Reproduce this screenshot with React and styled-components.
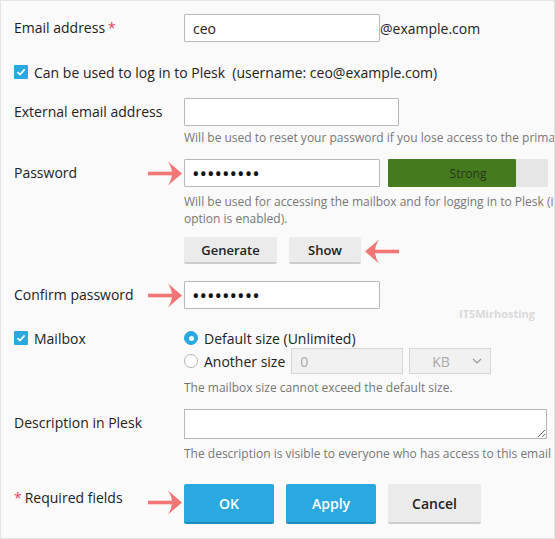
import React from 'react';
import styled, { createGlobalStyle } from 'styled-components';

const GlobalStyle = createGlobalStyle`
  body {
    margin: 0;
    font-family: "Open Sans", "Liberation Sans", sans-serif;
    color: #222;
  }
`;

const Frame = styled.div`
  position: relative;
  box-sizing: border-box;
  width: 555px;
  height: 539px;
  padding-top: 13px;
  border: 1px solid #e3e3e3;
  background: #fafafa;
  overflow: hidden;
`;

const Row = styled.div`
  position: relative;
  display: grid;
  grid-template-columns: 170px 1fr;
  padding-left: 13px;
  margin-top: ${props => props.gap || 0}px;
`;

const Label = styled.div`
  font-size: 14px;
  line-height: ${props => props.lh || 28}px;
  white-space: nowrap;
`;

const Star = styled.span`
  color: #e5405e;
  margin: 0 3px;
`;

const Field = styled.div`
  min-width: 0;
  display: flex;
  flex-direction: column;
  align-items: flex-start;
`;

const Inline = styled.div`
  display: flex;
  align-items: center;
  gap: ${props => props.gap || 0}px;
  font-size: 14px;
  white-space: nowrap;
  margin-top: ${props => props.mt || 0}px;
`;

const TextInput = styled.input`
  box-sizing: border-box;
  width: ${props => props.w}px;
  height: 28px;
  padding: 0 8px;
  border: 1px solid #b8b8b8;
  border-radius: 1px;
  background: #fff;
  font: 14px "Open Sans", "Liberation Sans", sans-serif;
  color: #222;
  outline: none;

  &[type='password'] {
    font-size: 20px;
    padding: 0 7px;
    color: #111;
  }
`;

const DisabledInput = styled.input`
  box-sizing: border-box;
  width: ${props => props.w}px;
  height: 26px;
  padding: 0 8px;
  border: 1px solid #d6d6d6;
  background: #f1f1f1;
  font: 14px "Open Sans", "Liberation Sans", sans-serif;
  color: #aaa;
`;

const FakeSelect = styled.div`
  box-sizing: border-box;
  display: flex;
  align-items: center;
  justify-content: space-between;
  width: 82px;
  height: 26px;
  padding: 0 8px 0 22px;
  border: 1px solid #d6d6d6;
  background: #f1f1f1;
  color: #aaa;
  font-size: 14px;
`;

const Hint = styled.div`
  font-size: 12px;
  line-height: 17px;
  color: #777;
  white-space: nowrap;
  margin-top: ${props => props.mt || 3}px;
`;

const Meter = styled.div`
  position: relative;
  width: 160px;
  height: 28px;
  background: #e6e6e6;
  border-radius: 1px;
  display: flex;
  align-items: center;
  justify-content: center;
  font-size: 12px;
  color: #27331c;
`;

const MeterFill = styled.div`
  position: absolute;
  left: 0;
  top: 0;
  bottom: 0;
  background: #467a1f;
  border-radius: 1px;
`;

const MeterText = styled.span`
  position: relative;
`;

const Button = styled.button`
  box-sizing: border-box;
  width: ${props => props.w}px;
  height: ${props => props.h || 27}px;
  border: 0;
  border-bottom: 2px solid ${props => (props.primary ? '#1d8cbf' : '#cdcdcd')};
  border-radius: 2px;
  background: ${props => (props.primary ? '#29a9e0' : '#ebebeb')};
  color: ${props => (props.primary ? '#fff' : '#222')};
  font: 600 ${props => props.fs || 13}px "Open Sans", "Liberation Sans", sans-serif;
  padding: 0;
`;

const Buttons = styled.div`
  display: flex;
  gap: ${props => props.gap || 12}px;
  margin-top: ${props => props.mt || 0}px;
`;

const Box = styled.span`
  display: inline-flex;
  align-items: center;
  justify-content: center;
  width: 14px;
  height: 14px;
  background: #29a9e0;
  border-radius: 1px;
  flex: none;
`;

const Radio = styled.span`
  box-sizing: border-box;
  display: inline-flex;
  align-items: center;
  justify-content: center;
  width: 14px;
  height: 14px;
  border-radius: 50%;
  flex: none;
  background: ${props => (props.on ? '#29a9e0' : '#fff')};
  border: 1px solid ${props => (props.on ? '#29a9e0' : '#b5b5b5')};

  &::after {
    content: '';
    width: 5px;
    height: 5px;
    border-radius: 50%;
    background: #fff;
    display: ${props => (props.on ? 'block' : 'none')};
  }
`;

const CheckRow = styled.div`
  display: flex;
  align-items: center;
  gap: 6px;
  padding-left: 13px;
  margin-top: 20px;
  height: 20px;
  font-size: 14px;
  white-space: nowrap;
`;

const MailboxLabel = styled.div`
  display: flex;
  align-items: center;
  gap: 6px;
  height: 20px;
  font-size: 14px;
`;

const TextArea = styled.textarea`
  box-sizing: border-box;
  width: 363px;
  height: 30px;
  border: 1px solid #b8b8b8;
  background: #fff;
  resize: vertical;
  display: block;
`;

const ArrowWrap = styled.div`
  position: absolute;
  left: ${props => props.x}px;
  top: ${props => props.y}px;
  width: 34px;
  height: 25px;
  transform: ${props => (props.flip ? 'scaleX(-1)' : 'none')};
`;

const Watermark = styled.div`
  position: absolute;
  right: 19px;
  top: 305px;
  font-size: 11px;
  font-weight: 700;
  color: #d9d9d9;
`;

const Arrow = ({ x, y, flip }) => (
  <ArrowWrap x={x} y={y} flip={flip}>
    <svg width="34" height="25" viewBox="0 0 34 25">
      <rect x="0" y="10.7" width="24" height="3.6" fill="#f37676" />
      <path d="M34 12.5 L20 0.5 Q24 7 24 12.5 Q24 18 20 24.5 Z" fill="#f37676" />
    </svg>
  </ArrowWrap>
);

const Tick = () => (
  <svg width="10" height="10" viewBox="0 0 10 10">
    <path d="M1.5 5.2 L4 7.6 L8.6 2.4" fill="none" stroke="#fff" strokeWidth="1.6" />
  </svg>
);

const Chevron = () => (
  <svg width="10" height="6" viewBox="0 0 10 6">
    <path d="M1 1 L5 5 L9 1" fill="none" stroke="#999" strokeWidth="1.2" />
  </svg>
);

export default function App() {
  return (
    <>
      <GlobalStyle />
      <Frame>
        <Row>
          <Label>
            Email address<Star>*</Star>
          </Label>
          <Field>
            <Inline>
              <TextInput w={196} defaultValue="ceo" />
              @example.com
            </Inline>
          </Field>
        </Row>

        <CheckRow>
          <Box>
            <Tick />
          </Box>
          Can be used to log in to Plesk&nbsp;&nbsp;(username: ceo@example.com)
        </CheckRow>

        <Row gap={16}>
          <Label>External email address</Label>
          <Field>
            <TextInput w={215} />
            <Hint>Will be used to reset your password if you lose access to the primary email address.</Hint>
          </Field>
        </Row>

        <Row gap={13}>
          <Label>Password</Label>
          <Arrow x={147} y={2} />
          <Field>
            <Inline gap={8}>
              <TextInput w={196} type="password" defaultValue="secret123" />
              <Meter>
                <MeterFill style={{ width: '80%' }} />
                <MeterText>Strong</MeterText>
              </Meter>
            </Inline>
            <Hint mt={6}>
              Will be used for accessing the mailbox and for logging in to Plesk (if the corresponding
              <br />
              option is enabled).
            </Hint>
            <Buttons mt={10}>
              <Button w={93}>Generate</Button>
              <Button w={72}>Show</Button>
            </Buttons>
          </Field>
          <Arrow x={364} y={80} flip />
        </Row>

        <Row gap={17}>
          <Label>Confirm password</Label>
          <Arrow x={147} y={2} />
          <Field>
            <TextInput w={196} type="password" defaultValue="secret123" />
          </Field>
        </Row>

        <Watermark>ITSMirhosting</Watermark>

        <Row gap={19}>
          <MailboxLabel>
            <Box>
              <Tick />
            </Box>
            Mailbox
          </MailboxLabel>
          <Field>
            <Inline gap={6} style={{ height: 20 }}>
              <Radio on />
              Default size (Unlimited)
            </Inline>
            <Inline gap={6}>
              <Radio />
              Another size
              <DisabledInput w={112} defaultValue="0" disabled />
              <FakeSelect>
                KB
                <Chevron />
              </FakeSelect>
            </Inline>
            <Hint mt={5}>The mailbox size cannot exceed the default size.</Hint>
          </Field>
        </Row>

        <Row gap={13}>
          <Label>Description in Plesk</Label>
          <Field>
            <TextArea />
            <Hint mt={6}>The description is visible to everyone who has access to this email account.</Hint>
          </Field>
        </Row>

        <Row gap={22}>
          <Label>
            <Star style={{ marginLeft: 0 }}>*</Star>Required fields
          </Label>
          <Arrow x={147} y={6} />
          <Field>
            <Buttons>
              <Button w={90} h={40} fs={14} primary>OK</Button>
              <Button w={90} h={40} fs={14} primary>Apply</Button>
              <Button w={93} h={40} fs={14}>Cancel</Button>
            </Buttons>
          </Field>
        </Row>
      </Frame>
    </>
  );
}
